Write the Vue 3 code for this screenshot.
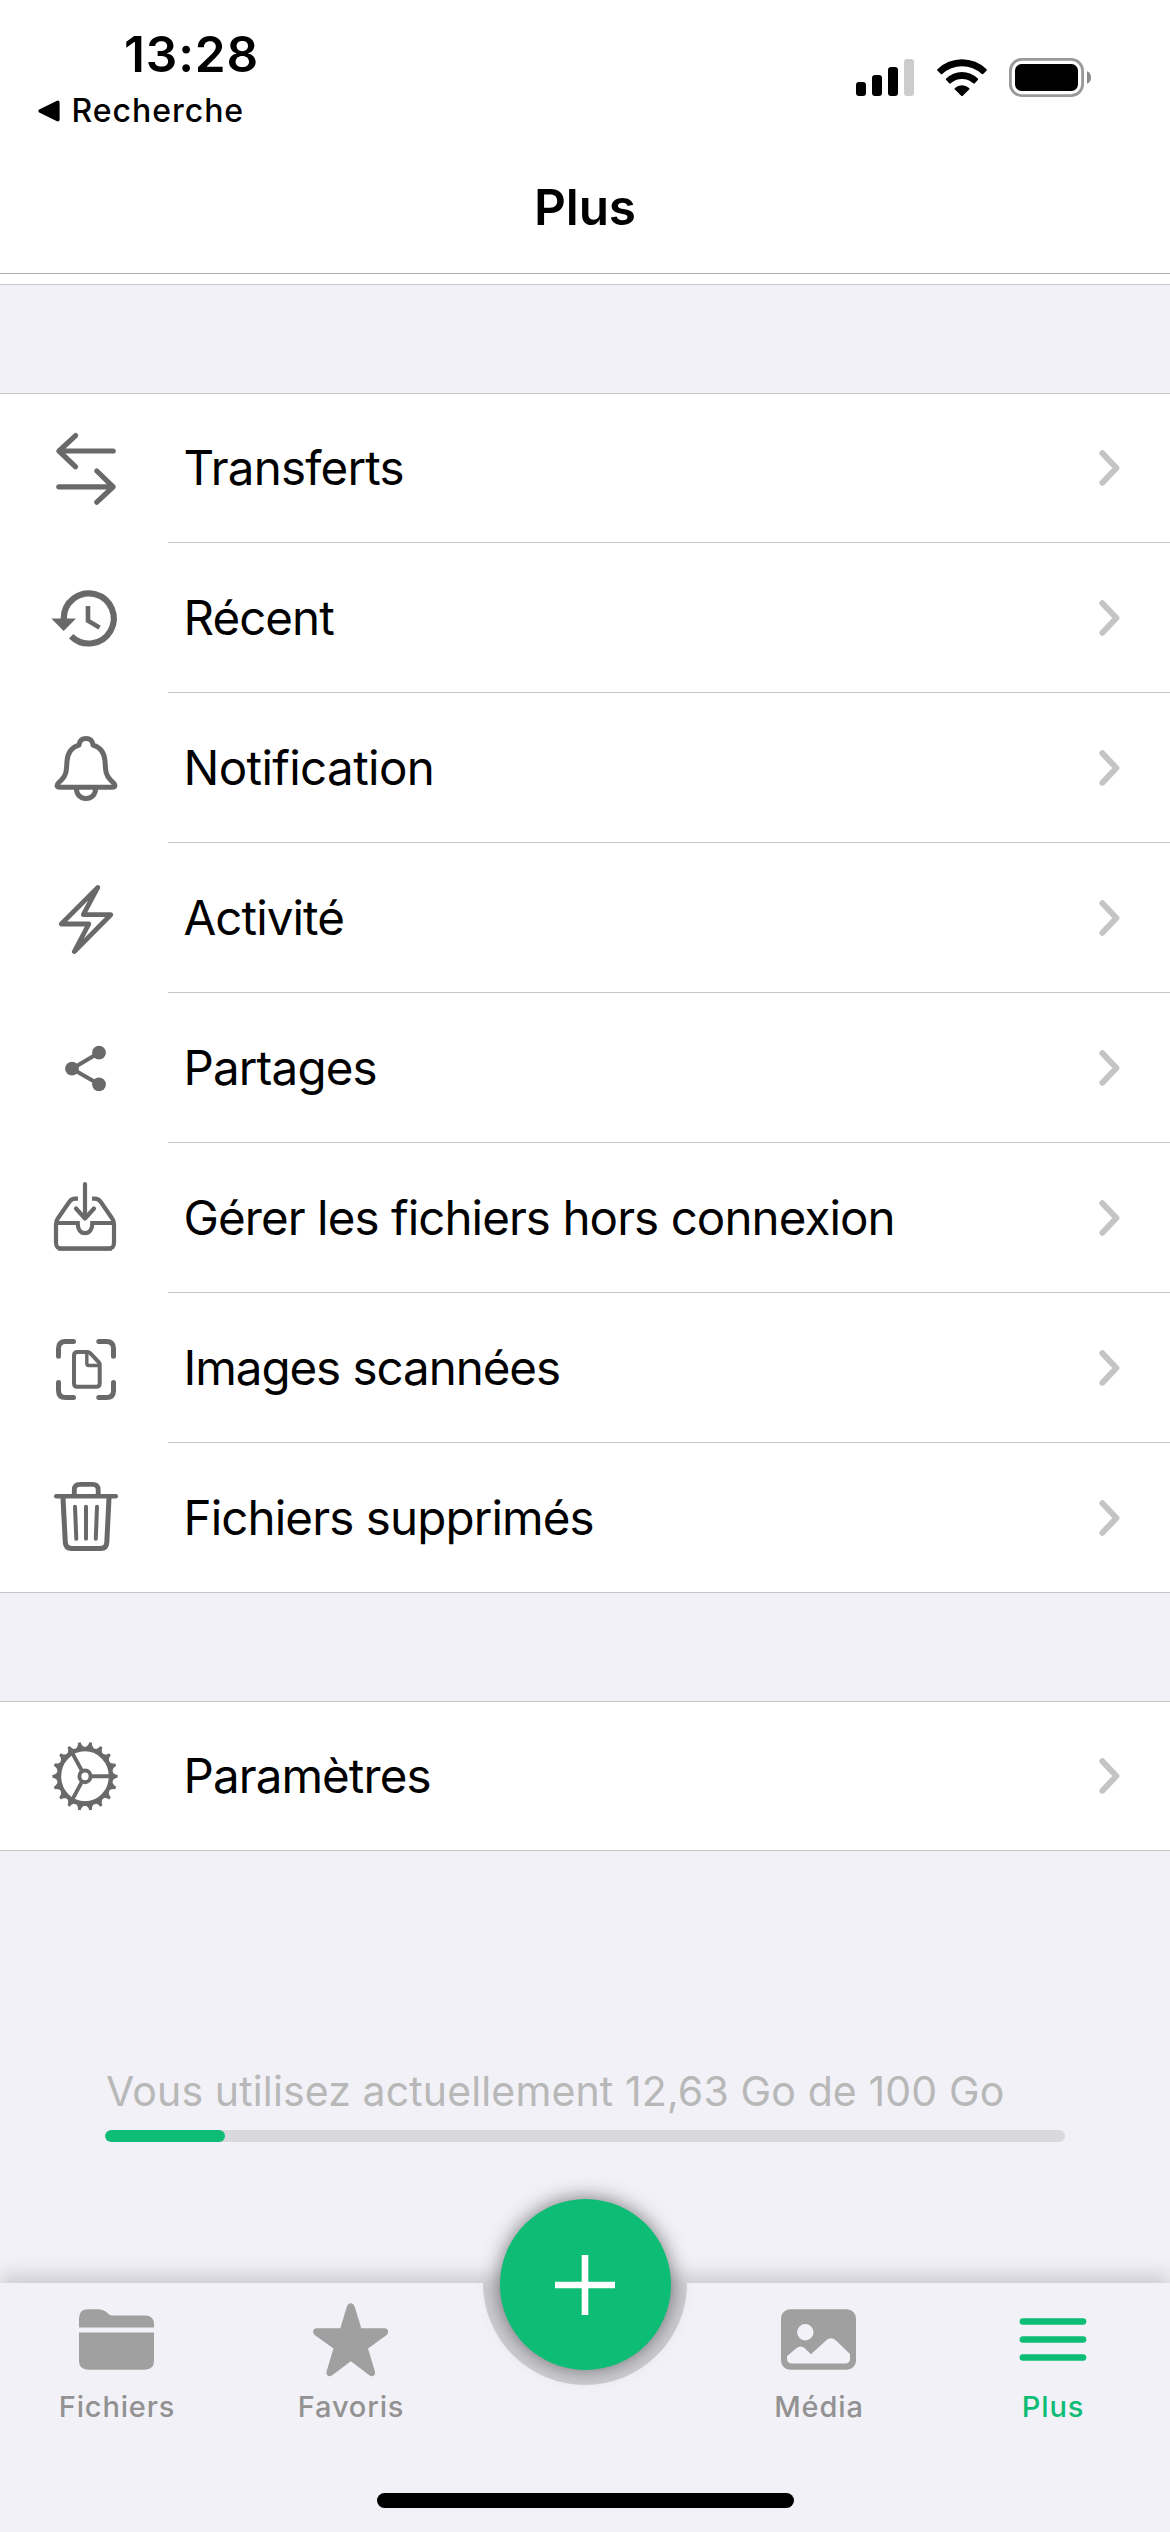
<script setup>
const groups = [
  [
    { icon: 'transfers', label: 'Transferts', tracking: -0.8 },
    { icon: 'recent', label: 'Récent', tracking: -0.95 },
    { icon: 'bell', label: 'Notification', tracking: -0.63 },
    { icon: 'bolt', label: 'Activité', tracking: -0.93 },
    { icon: 'share', label: 'Partages', tracking: -0.84 },
    { icon: 'offline', label: 'Gérer les fichiers hors connexion', tracking: -0.93 },
    { icon: 'scan', label: 'Images scannées', tracking: -1.05 },
    { icon: 'trash', label: 'Fichiers supprimés', tracking: -0.88 },
  ],
  [{ icon: 'gear', label: 'Paramètres', tracking: -0.92 }],
]

const usedShare = 12.5
const gearTeeth = Array.from({ length: 18 }, (_, i) => i * 20)
</script>

<template>
  <div class="screen">
    <header class="top">
      <div class="status">
        <div class="status-left">
          <div class="time">13:28</div>
          <div class="back">
            <svg class="back-arrow" width="22" height="22" viewBox="0 0 22 22">
              <path d="M1.2 9.6 19 .7Q21.6 0 21.6 2.6V19.4Q21.6 22 19 21.3L1.2 12.4Q-.6 11 1.2 9.6Z" />
            </svg>
            <span>Recherche</span>
          </div>
        </div>
        <div class="status-right">
          <svg class="signal" width="58" height="37" viewBox="0 0 58 37">
            <rect x="0" y="23" width="10" height="14" rx="3" />
            <rect x="16" y="16" width="10" height="21" rx="3" />
            <rect x="32" y="8" width="10" height="29" rx="3" />
            <rect x="48" y="0" width="10" height="37" rx="3" fill="#ccc" />
          </svg>
          <svg class="wifi" width="50" height="37" viewBox="0 0 50 37">
            <path d="M.4 10.3A35 35 0 0 1 49.6 10.3Q50.2 11 49.6 11.6L46.2 15Q45.5 15.5 44.8 15A29 29 0 0 0 5.2 15Q4.5 15.5 3.8 15L.4 11.6Q-.2 11 .4 10.3Z" />
            <path d="M9.2 19.5A22.4 22.4 0 0 1 40.8 19.5Q41.6 20.3 40.8 21L37.8 24.3Q37 25 36.2 24.3A16.5 16.5 0 0 0 13.8 24.3Q13 25 12.2 24.3L9.2 21Q8.4 20.3 9.2 19.5Z" />
            <path d="M17.9 28.9A11 11 0 0 1 32.1 28.9Q32.9 29.8 32.1 30.5L25.8 36.7Q25 37.4 24.2 36.7L17.9 30.5Q17.1 29.8 17.9 28.9Z" />
          </svg>
          <svg class="battery" width="83" height="39" viewBox="0 0 83 39">
            <rect x="1.4" y="1.4" width="72.2" height="36.2" rx="11.5" fill="none" stroke="#999" stroke-width="2.8" />
            <rect x="6" y="6" width="63" height="27" rx="6.5" />
            <path d="M78 13.3Q82 15 82 19.5T78 25.7Z" fill="#8a8a8a" />
          </svg>
        </div>
      </div>
      <h1 class="title">Plus</h1>
    </header>

    <main class="content">
      <div class="gap-first"></div>
      <ul v-for="(group, g) in groups" :key="g" class="group">
        <li v-for="row in group" :key="row.icon" class="row">
          <svg class="row-icon" width="80" height="100" viewBox="0 0 80 100">
            <g v-if="row.icon === 'transfers'" stroke-width="5.2">
              <path d="M68.2 33H14M30.6 17.6 14 33 30.6 48.8" />
              <path d="M13.8 68.8H68M51.8 53 68.2 68.8 51.8 84.2" />
            </g>
            <g v-else-if="row.icon === 'recent'" class="butt">
              <path stroke-width="6.2" d="M18.8 52V50.3A25 25 0 1 1 26.2 68.2" />
              <path class="solid" d="M6.3 50.6H31L18.7 63Z" />
              <path stroke-width="4.6" d="M43 38V52.6L54.6 59.6" />
            </g>
            <g v-else-if="row.icon === 'bell'" stroke-width="5">
              <path d="M34 27.2C34.3 22.8 37 20.4 41 20.4S47.7 22.8 48 27.2C54.5 29 59.2 33.5 60 43C60.6 53 60.5 57 65.5 62L68.6 65C71 67.5 69.8 69.2 67.5 69.2H14.5C12.2 69.2 11 67.5 13.4 65L16.5 62C21.5 57 21.4 53 22 43C22.8 33.5 27.5 29 34 27.2Z" />
              <path class="butt" d="M31.4 70.5C31.4 76.5 35.5 80.6 41 80.6S50.6 76.5 50.6 70.5" />
            </g>
            <path v-else-if="row.icon === 'bolt'" stroke-width="4.8" d="M52.8 19.4 16.3 56H43.8L29.3 83.6 65.8 46.7H38.3Z" />
            <g v-else-if="row.icon === 'share'" stroke-width="4">
              <path d="M54 34.7 27 50.7 54 66.3" />
              <circle class="solid" cx="54" cy="34.7" r="6.9" />
              <circle class="solid" cx="27" cy="50.7" r="6.9" />
              <circle class="solid" cx="54" cy="66.3" r="6.9" />
            </g>
            <g v-else-if="row.icon === 'offline'" stroke-width="4.2">
              <path d="M40 16V50M31 40.5 40 50.5 49 40.5" />
              <g class="butt">
                <path d="M33 30.7H30.5C27.5 30.7 26 31.5 24.2 34L12.8 50.5C11.5 52.3 11 53.5 11 56V74.500C11 78.8 12.5 80.5 17 80.5H63C67.5 80.5 69 78.8 69 74.5V56C69 53.5 68.5 52.3 67.2 50.5L55.8 34C54 31.5 52.5 30.7 49.5 30.7H47" />
                <path d="M13 80.7H67" />
                <path d="M11 55H32.7C32.7 61.5 35.5 65.2 40 65.2S47.3 61.5 47.3 55H69" />
              </g>
            </g>
            <g v-else-if="row.icon === 'scan'">
              <path stroke-width="5" d="M13.5 38.3V30.5Q13.5 23.5 20.5 23.5H28.5M53.8 23.5H61.5Q68.5 23.5 68.5 30.5V38.3M68.5 64.6V72.5Q68.5 79.5 61.5 79.5H53.8M28.5 79.5H20.5Q13.5 79.5 13.5 72.5V64.6" />
              <path stroke-width="4" d="M32.5 34H42.5Q44 34 45.2 35.2L53.5 43.8Q54.7 45 54.7 47V65.3Q54.7 68.8 51.2 68.8H32.5Q29 68.8 29 65.3V37.5Q29 34 32.5 34Z" />
              <path stroke-width="3.4" d="M41.8 35V45.5Q41.8 47.5 43.8 47.5H54" />
            </g>
            <g v-else-if="row.icon === 'trash'">
              <path stroke-width="4.4" d="M11.2 28.3H70.8" />
              <path class="butt" stroke-width="4.8" d="M29.3 28V22Q29.3 16.4 35 16.4H47.5Q53.2 16.4 53.2 22V28" />
              <path class="butt" stroke-width="5" d="M18 30 20.3 74.5Q20.7 80.4 26.5 80.4H55.8Q61.5 80.4 61.8 74.5L64 30" />
              <path stroke-width="4" d="M30 38.7 31.3 70.8M41 38.7V70.8M52 38.7 50.8 70.8" />
            </g>
            <g v-else class="butt" transform="translate(40 50.3) scale(1 1.05)">
              <circle r="26" stroke-width="4.4" />
              <path v-for="a in gearTeeth" :key="a" class="solid" :transform="`rotate(${a})`" d="M26.5-4.6C29-3.2 29.5-1.5 32.6-1.4V1.4C29.5 1.5 29 3.2 26.5 4.6Z" />
              <circle r="5.6" stroke-width="3.8" />
              <path stroke-width="3.8" d="M7 0H25M-3.5-6-12.6-22M-3.5 6-12.6 22" />
            </g>
          </svg>
          <span class="row-label" :style="{ letterSpacing: row.tracking + 'px' }">{{ row.label }}</span>
          <svg class="chevron" width="24" height="38" viewBox="0 0 24 38">
            <path d="M4.4 4.2 18.400 19 4.4 33.800" />
          </svg>
        </li>
      </ul>

      <section class="storage">
        <p class="storage-text">Vous utilisez actuellement 12,63 Go de 100 Go</p>
        <div class="storage-track">
          <div class="storage-used" :style="{ width: usedShare + '%' }"></div>
        </div>
      </section>
    </main>

    <nav class="tabs">
      <svg class="tabs-back" width="1170" height="309" viewBox="0 -60 1170 309">
        <defs>
          <filter id="bar-shadow" x="-60" y="-60" width="1290" height="400" filterUnits="userSpaceOnUse">
            <feGaussianBlur stdDeviation="9" />
          </filter>
        </defs>
        <rect x="0" y="-9" width="1170" height="249" fill="#000" fill-opacity=".15" filter="url(#bar-shadow)" />
        <path d="M0 0H483A102 102 0 0 0 687 0H1170V249H0Z" fill="#f2f1f7" />
      </svg>
      <div class="tab">
        <svg class="tab-icon" width="76" height="76" viewBox="0 0 76 76">
          <path d="M0 24.5V15.500Q0 6.3 9 6.3H20Q24 6.3 27 8.8L29.5 11Q31.5 12.5 33.500 12.5H66Q75 12.5 75 21.5V24.5Z" />
          <path d="M0 29.5H75V57.5Q75 66.7 66 66.7H9Q0 66.7 0 57.5Z" />
        </svg>
        <span class="tab-label">Fichiers</span>
      </div>
      <div class="tab">
        <svg class="tab-icon" width="76" height="76" viewBox="0 0 76 76">
          <path d="M27.3 25.3 33.8 3.8C35-.9 40.5-.9 41.7 3.8L48.3 25.3H71.5C75.5 25.3 76.5 29.8 73 32.5L55 45.6 61.8 68C63 72.3 59.5 74.5 56.3 72.3L37.8 58.3 19.2 72.3C16 74.5 12.5 72.3 13.7 68L20.5 45.6 2.3 32.5C-1.2 29.8-.2 25.3 3.8 25.3Z" />
        </svg>
        <span class="tab-label">Favoris</span>
      </div>
      <div class="tab"></div>
      <div class="tab">
        <svg class="tab-icon" width="76" height="76" viewBox="0 0 76 76">
          <rect x="0" y="6.3" width="75" height="60.4" rx="9" />
          <circle class="hole" cx="24.3" cy="29.3" r="8.2" />
          <path class="hole" d="M6 53.3 15.5 45Q19.5 41.8 23.5 45L30 51.2 45 37.5Q50 32.8 55 37.5L69 51V55.5Q69 60.5 64 60.5H11Q6 60.5 6 55.5Z" />
        </svg>
        <span class="tab-label">Média</span>
      </div>
      <div class="tab active">
        <svg class="tab-icon" width="76" height="76" viewBox="0 0 76 76">
          <rect x="4.6" y="15.2" width="66.7" height="6.6" rx="3.3" />
          <rect x="4.6" y="33.2" width="66.7" height="6.6" rx="3.3" />
          <rect x="4.6" y="51.2" width="66.7" height="6.6" rx="3.3" />
        </svg>
        <span class="tab-label">Plus</span>
      </div>
      <button class="fab" type="button" aria-label="Ajouter">
        <svg width="60" height="60" viewBox="0 0 60 60">
          <path d="M0 30H60M30 0V60" stroke="#fff" stroke-width="6.6" />
        </svg>
      </button>
      <div class="home-indicator"></div>
    </nav>
  </div>
</template>

<style>
body {
  margin: 0;
}
</style>

<style scoped>
.screen {
  width: 1170px;
  height: 2532px;
  display: flex;
  flex-direction: column;
  overflow: hidden;
  background: #f2f1f7;
  color: #000;
  font-family: Inter, "Liberation Sans", sans-serif;
}

.top {
  box-sizing: border-box;
  height: 274px;
  background: #fff;
  border-bottom: 1px solid #acacac;
}

.status {
  display: flex;
  justify-content: space-between;
  height: 177px;
}

.status-left {
  padding: 29px 0 0 38px;
}

.time {
  margin-left: 86px;
  font-size: 49.5px;
  font-weight: 600;
  line-height: 50px;
  letter-spacing: 0.86px;
}

.back {
  display: flex;
  align-items: center;
  margin-top: 12px;
  font-size: 32px;
  font-weight: 450;
  line-height: 40px;
  letter-spacing: 0.97px;
}

.back-arrow {
  margin-right: 11.5px;
}

.status-right {
  display: flex;
  align-items: flex-start;
  padding: 58px 78px 0 0;
}

.signal {
  margin-top: 1px;
}

.wifi {
  margin: 1px 22px 0 23px;
}

.title {
  margin: 0;
  font-size: 49.5px;
  font-weight: 600;
  line-height: 60px;
  letter-spacing: -0.13px;
  text-align: center;
}

.content {
  flex: 1;
}

.gap-first {
  height: 10px;
  background: #fff;
  border-bottom: 1px solid #c6c6c8;
  margin-bottom: 108px;
}

.group {
  margin: 0;
  padding: 0;
  list-style: none;
  background: #fff;
  box-shadow: inset 0 1px #c6c6c8, inset 0 -1px #c6c6c8;
}

.group + .group {
  margin-top: 108px;
}

.row {
  display: flex;
  align-items: center;
  height: 150px;
  padding: 0 48px 0 45px;
  background: linear-gradient(#c6c6c8, #c6c6c8) 168px 100% / 100% 1px no-repeat;
}

.row-icon {
  fill: none;
  stroke: #696969;
  stroke-linecap: round;
  stroke-linejoin: round;
}

.row-icon .butt {
  stroke-linecap: butt;
  stroke-linejoin: miter;
}

.row-icon .solid {
  fill: #696969;
  stroke: none;
}

.row-label {
  flex: 1;
  margin-left: 58.5px;
  font-size: 47.5px;
  line-height: 150px;
  white-space: nowrap;
}

.chevron {
  fill: none;
  stroke: #c4c4c6;
  stroke-width: 6px;
  stroke-linecap: round;
  stroke-linejoin: round;
}

.storage {
  margin: 215px 105px 0;
}

.storage-text {
  margin: 0 0 14px 1px;
  color: #b8b8b8;
  font-size: 41px;
  line-height: 50px;
  letter-spacing: 0.13px;
  white-space: nowrap;
}

.storage-track {
  height: 12px;
  border-radius: 6px;
  background: #d9d8dd;
  overflow: hidden;
}

.storage-used {
  height: 12px;
  border-radius: 6px;
  background: #0dbc75;
}

.tabs {
  position: relative;
  display: grid;
  grid-template-columns: repeat(5, 1fr);
  height: 249px;
}

.tabs-back {
  position: absolute;
  left: 0;
  bottom: 0;
}

.tab {
  position: relative;
  display: flex;
  flex-direction: column;
  align-items: center;
  padding-top: 20px;
  color: #929292;
}

.tab-icon {
  fill: #a0a0a0;
}

.tab-icon .hole {
  fill: #f2f1f7;
}

.tab.active {
  color: #0dbc75;
}

.tab.active .tab-icon {
  fill: #0dbc75;
}

.tab-label {
  margin-top: 8px;
  font-size: 29px;
  font-weight: 500;
  line-height: 40px;
  letter-spacing: 0.85px;
}

.fab {
  position: absolute;
  top: -84px;
  left: 499.5px;
  width: 171px;
  height: 171px;
  padding: 0;
  border: 0;
  border-radius: 50%;
  background: #0dbc75;
  box-shadow: 0 -1px 20px rgba(0, 0, 0, 0.5);
  display: grid;
  place-items: center;
}

.home-indicator {
  position: absolute;
  left: 377px;
  bottom: 24px;
  width: 417px;
  height: 15px;
  border-radius: 8px;
  background: #000;
}
</style>
